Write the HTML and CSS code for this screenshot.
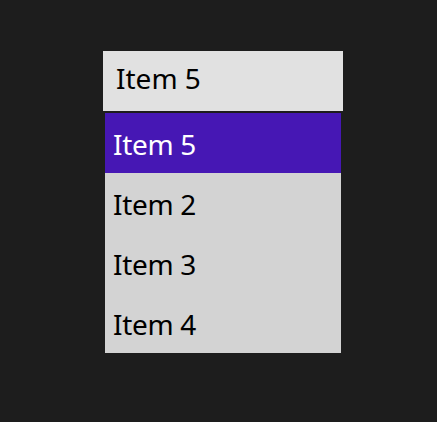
FILE: index.html
```html
<!DOCTYPE html>
<html>
<head>
<meta charset="utf-8">
<link rel="stylesheet" href="styles.css">
</head>
<body>
<div class="combo">
  <div class="combo-field">Item 5</div>
  <ul class="combo-list">
    <li class="combo-item selected">Item 5</li>
    <li class="combo-item">Item 2</li>
    <li class="combo-item">Item 3</li>
    <li class="combo-item">Item 4</li>
  </ul>
</div>
</body>
</html>
```
FILE: styles.css
```css
html, body {
  margin: 0;
  padding: 0;
  background: #1d1d1d;
  width: 437px;
  height: 422px;
  overflow: hidden;
}
body {
  font-family: "Noto Sans", "Open Sans", sans-serif;
  font-size: 28px;
  letter-spacing: -0.3px;
}
.combo {
  display: flex;
  flex-direction: column;
  width: 240px;
  padding: 51px 0 0 103px;
  gap: 2px;
}
.combo-field {
  height: 60px;
  box-sizing: border-box;
  display: flex;
  align-items: center;
  padding: 0 0 6px 13px;
  background: #e1e1e1;
  color: #000;
  letter-spacing: 0;
}
.combo-list {
  list-style: none;
  margin: 0 0 0 2px;
  padding: 0;
  width: 236px;
  background: #d3d3d3;
}
.combo-item {
  height: 60px;
  box-sizing: border-box;
  display: flex;
  align-items: center;
  padding: 1px 0 0 8px;
  color: #000;
}
.combo-item.selected {
  background: #4617b4;
  color: #fff;
}
```
